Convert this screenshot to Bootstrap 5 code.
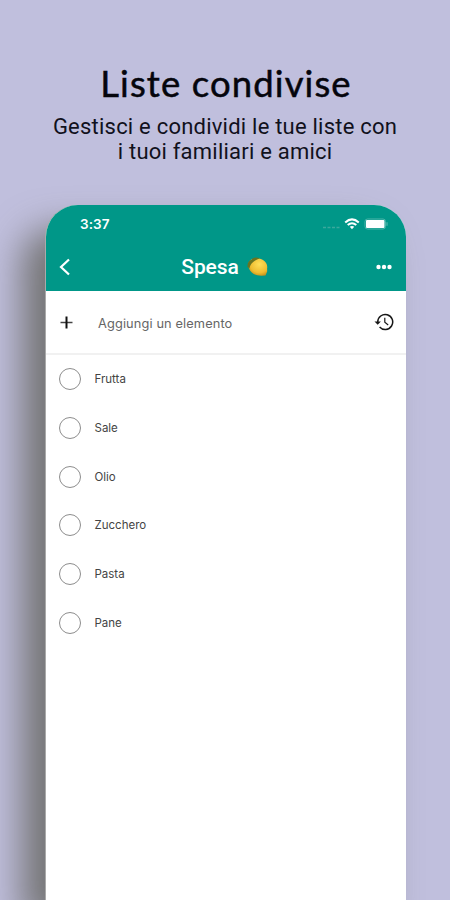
<!DOCTYPE html>
<html lang="it">
<head>
<meta charset="utf-8">
<meta name="viewport" content="width=device-width, initial-scale=1">
<title>Liste condivise</title>
<link href="https://cdn.jsdelivr.net/npm/bootstrap@5.3.0/dist/css/bootstrap.min.css" rel="stylesheet">
<style>
body{background:#c0bfdd;height:900px;font-family:Inter,"Liberation Sans",sans-serif}
.promo{height:205px;padding-top:61px;color:#05050c}
.promo h1{font:400 36.5px/44px Lato,sans-serif;letter-spacing:1.1px;-webkit-text-stroke:.5px #05050c;margin:0 0 9px;padding-left:2px}
.promo p{font:400 22px/25px Roboto,sans-serif;letter-spacing:.22px;color:#11111c}
.phone{width:360px;height:695px;margin-left:46px;border-radius:32px 32px 0 0;background:#fff;box-shadow:-1px 0 0 #aaa,-24px 24px 36px #747474}
.top-area{background:#009788;height:86px;border-radius:32px 32px 0 0;color:#fff}
.status{height:38px;padding:0 18px 0 34px}
.clock{font-size:13.5px;font-weight:600;letter-spacing:.1px}
.signal{color:#3aa99c}
.title-bar{height:48px;padding:0 14px 0 11px}
.title-bar h2{font:500 21px/28px Roboto,sans-serif;letter-spacing:-.1px}
.add-row{height:64px;border-bottom:2px solid #f1f1f1;padding:0 12px 0 13px}
.add-label{font-size:12.8px;letter-spacing:.12px;color:#666;margin-left:24px;padding-top:3px}
.item{height:48.7px;padding-left:13px;font-size:11.5px;color:#444}
.item span+span{margin-left:13.5px;padding-top:1px}
.ring{width:22px;height:22px;border:1px solid #8d8d8d}
</style>
</head>
<body class="overflow-hidden">
<header class="promo text-center text-nowrap">
<h1>Liste condivise</h1>
<p class="m-0">Gestisci e condividi le tue liste con<br>i tuoi familiari e amici</p>
</header>
<main class="phone">
<div class="top-area">
<div class="status d-flex align-items-center justify-content-between">
<span class="clock">3:37</span>
<div class="d-flex align-items-center">
<svg class="signal me-1" width="18" height="12"><path d="M1 9.500h3M5.500 9.500h3M10 9.500h3M14.500 9.500h3" stroke="currentColor" stroke-width="1.500"/></svg>
<svg class="me-1" width="16" height="12" viewBox="0 0 16 12" fill="none" stroke="#fff" stroke-width="2"><path d="M1.200 4.500Q8-1.800 14.800 4.500M3.700 7.100Q8 3.300 12.300 7.100"/><path d="M5.800 8.800Q8 7.200 10.200 8.800L8 11.200Z" fill="#fff" stroke="none"/></svg>
<svg width="24" height="12" viewBox="0 0 24 12"><rect x="1" y="1" width="20.500" height="10" rx="2.500" fill="none" stroke="#4db5aa"/><rect x="2" y="2" width="18.500" height="8" rx="1" fill="#fff"/><path d="M23 4.300v3.500" stroke="#4db5aa" stroke-width="1.300"/></svg>
</div>
</div>
<div class="title-bar d-flex align-items-center justify-content-between">
<svg width="16" height="20" viewBox="0 0 16 20"><path d="M12 2.500 4 10l8 7.500" fill="none" stroke="#fff" stroke-width="2.200"/></svg>
<div class="d-flex align-items-center">
<h2 class="m-0">Spesa</h2>
<svg class="ms-2" width="21" height="20" viewBox="0 0 21 20"><defs><radialGradient id="peel" cx=".58" cy=".35" r=".8"><stop offset="0" stop-color="#ffdf58"/><stop offset=".6" stop-color="#eebc30"/><stop offset="1" stop-color="#a8780c"/></radialGradient></defs><path d="M3 3.500C7 .5 12 .5 16 3c3.500 2.200 4.700 5.500 4.100 8.500l.1 3-1.700 4-3.500.2C9 19 4 16.500 2 11.500 1 8.500 1 5.500 3 3.500Z" fill="url(#peel)"/><path d="M13 1.500C10-.2 6 .3 4.500 2.800 1.500 3.500 0 7 .6 10l1.900 1.500C3 8 5.500 3.500 13 1.500Z" fill="#687421"/></svg>
</div>
<svg width="16" height="6" fill="#fff"><circle cx="2.500" cy="3" r="2.200"/><circle cx="8" cy="3" r="2.200"/><circle cx="13.500" cy="3" r="2.200"/></svg>
</div>
</div>
<div class="add-row d-flex align-items-center">
<svg width="15" height="15" viewBox="0 0 15 15"><path d="M1.500 7.500h12" stroke="#444" stroke-width="1.500"/><path d="M7.500 1.500v12" stroke="#111" stroke-width="2"/></svg>
<span class="add-label">Aggiungi un elemento</span>
<svg class="ms-auto" width="20" height="20" viewBox="0 0 20 20" fill="none" stroke="#171717" stroke-width="1.500"><path d="M3.700 10a7.500 7.500 0 1 1 1.900 5"/><path d="M.5 9.500h6.400L3.700 12.800Z" fill="#171717" stroke="none"/><path d="M10.800 5.800v4.500l3.400 2.700" stroke-width="1.200"/></svg>
</div>
<div>
<div class="item d-flex align-items-center"><span class="ring rounded-circle"></span><span>Frutta</span></div>
<div class="item d-flex align-items-center"><span class="ring rounded-circle"></span><span>Sale</span></div>
<div class="item d-flex align-items-center"><span class="ring rounded-circle"></span><span>Olio</span></div>
<div class="item d-flex align-items-center"><span class="ring rounded-circle"></span><span>Zucchero</span></div>
<div class="item d-flex align-items-center"><span class="ring rounded-circle"></span><span>Pasta</span></div>
<div class="item d-flex align-items-center"><span class="ring rounded-circle"></span><span>Pane</span></div>
</div>
</main>
<script src="https://cdn.jsdelivr.net/npm/bootstrap@5.3.0/dist/js/bootstrap.bundle.min.js"></script>
</body>
</html>
